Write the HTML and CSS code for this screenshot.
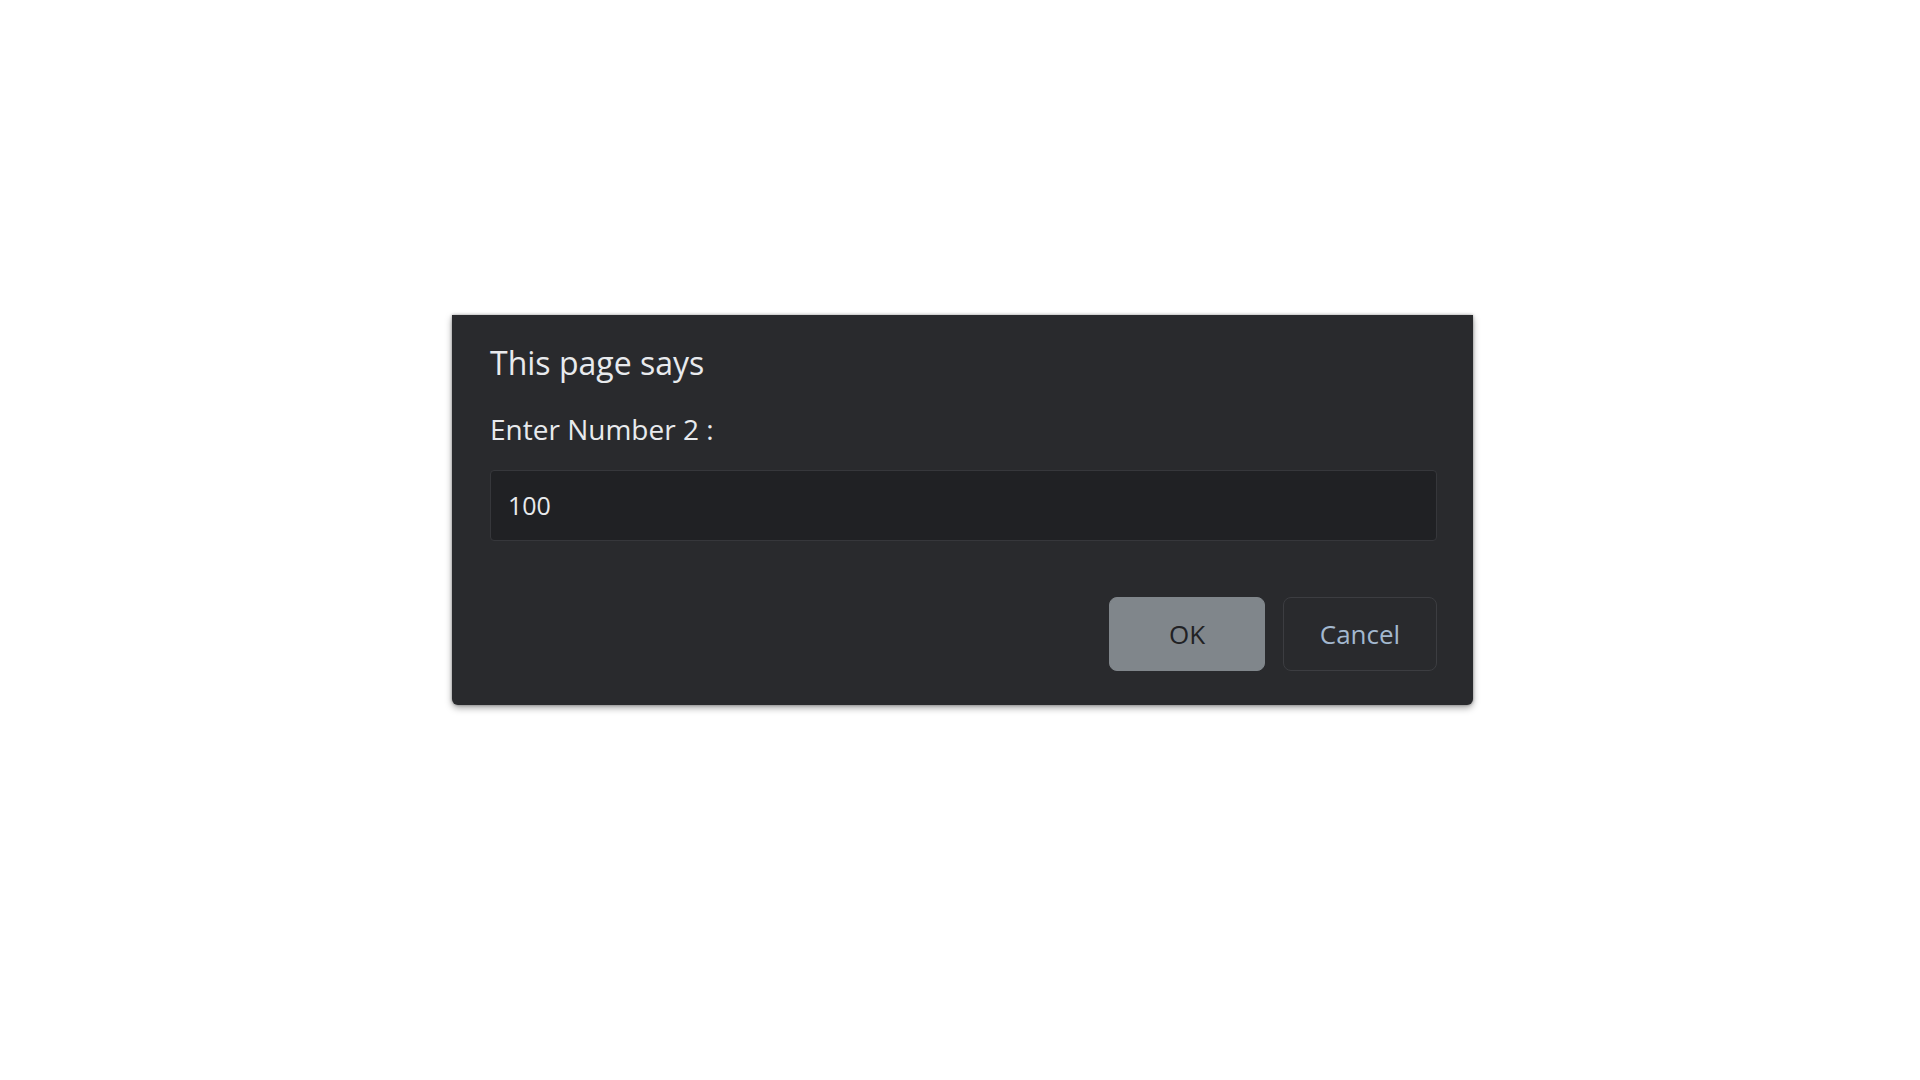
FILE: index.html
```html
<!DOCTYPE html>
<html lang="en">
<head>
<meta charset="utf-8">
<title>This page says</title>
<link rel="stylesheet" href="styles.css">
</head>
<body>
<div class="dialog">
  <div class="title">This page says</div>
  <div class="message">Enter Number 2 :</div>
  <input class="field" type="text" value="100">
  <div class="actions">
    <button class="btn btn-ok">OK</button>
    <button class="btn btn-cancel">Cancel</button>
  </div>
</div>
</body>
</html>
```

FILE: styles.css
```css
html, body {
  margin: 0;
  padding: 0;
  background: #ffffff;
}

body {
  width: 1920px;
  height: 1080px;
  overflow: hidden;
  font-family: "Open Sans", "Noto Sans", sans-serif;
}

.dialog {
  box-sizing: border-box;
  width: 1021px;
  height: 390px;
  margin: 315px 0 0 452px;
  padding: 26px 36px 34px 38px;
  background: #292a2d;
  border-radius: 0 0 6px 6px;
  box-shadow: 0 3px 7px rgba(0, 0, 0, 0.35), 0 0 3px rgba(0, 0, 0, 0.35);
  display: flex;
  flex-direction: column;
}

.title {
  font-size: 32px;
  line-height: 43.6px;
  color: #e8eaed;
  white-space: nowrap;
}

.message {
  margin-top: 25px;
  font-size: 28px;
  line-height: 38px;
  color: #e8eaed;
  white-space: nowrap;
}

.field {
  box-sizing: border-box;
  margin: 22px 0 0 0;
  width: 947px;
  height: 71px;
  padding: 0 17px;
  background: #202124;
  border: 1px solid #36373b;
  border-radius: 4px;
  color: #e8eaed;
  font-family: "Open Sans", "Noto Sans", sans-serif;
  font-size: 25px;
  outline: none;
}

.actions {
  display: flex;
  justify-content: flex-end;
  gap: 18px;
  margin-top: 56px;
}

.btn {
  box-sizing: border-box;
  height: 74px;
  border-radius: 8px;
  font-family: "Open Sans", "Noto Sans", sans-serif;
  font-size: 26px;
  padding: 0;
  cursor: pointer;
}

.btn-ok {
  width: 156px;
  background: #80868b;
  border: 1px solid #80868b;
  color: #202124;
}

.btn-cancel {
  width: 154px;
  background: #292a2d;
  border: 1px solid #3c3d41;
  color: #a3b8cf;
}
```
